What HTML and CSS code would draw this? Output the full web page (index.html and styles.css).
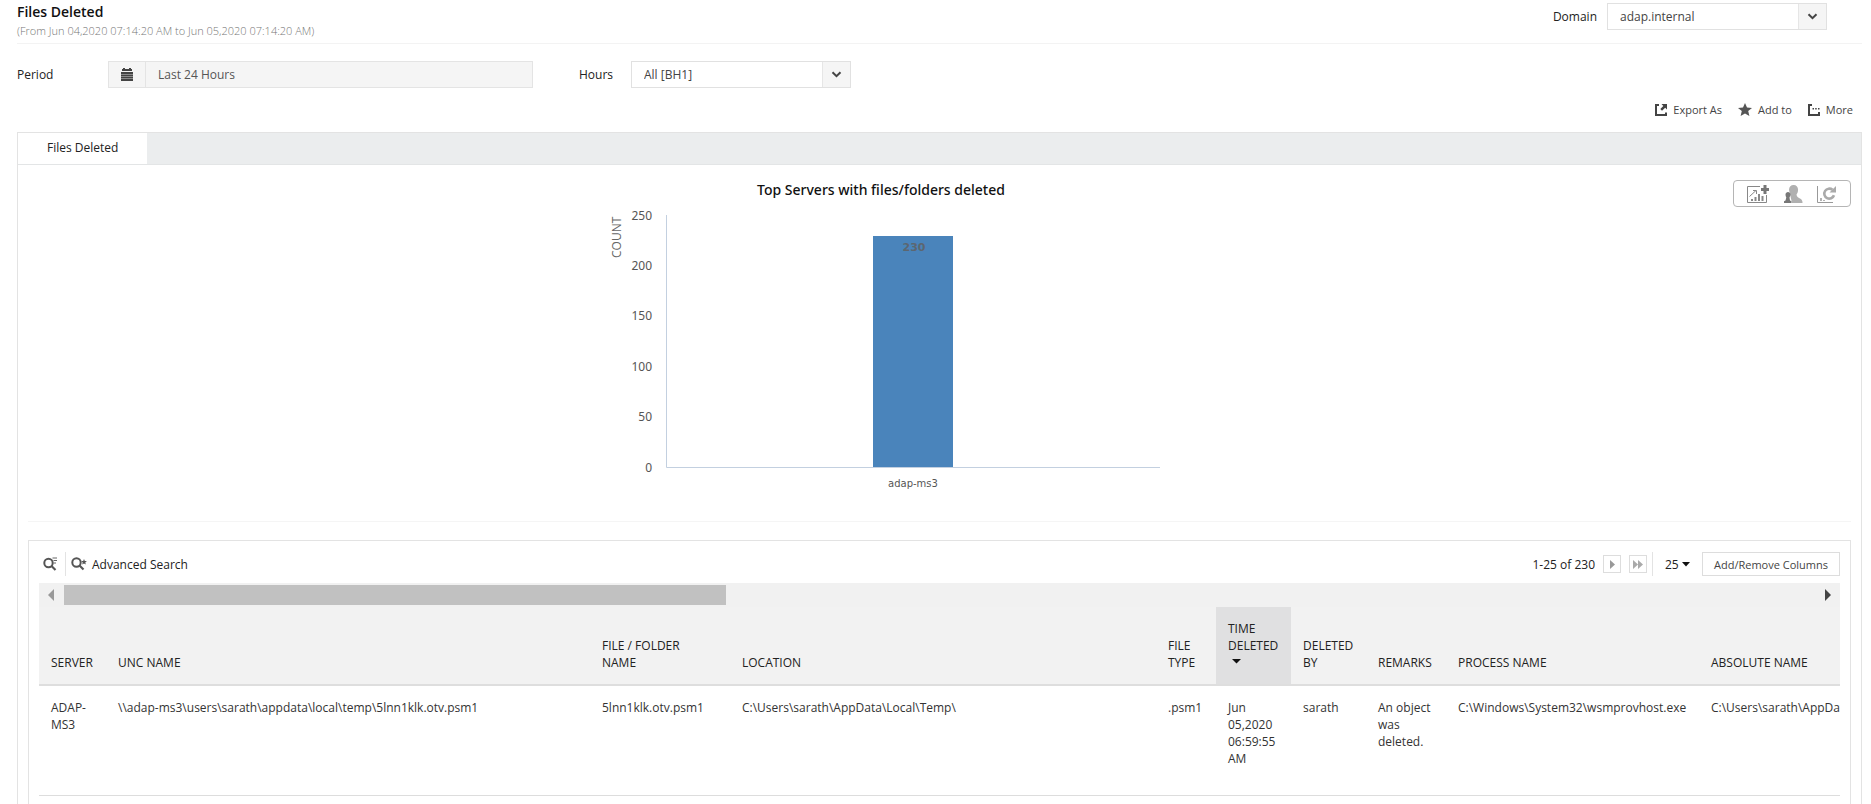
FILE: index.html
```html
<!DOCTYPE html>
<html lang="en">
<head>
    <meta charset="UTF-8">
    <meta name="viewport" content="width=device-width, initial-scale=1.0">
    <title>Files Deleted</title>
    <link rel="stylesheet" href="styles.css">
</head>
<body>
    <header class="page-header">
        <div class="page-heading">
            <h1>Files Deleted</h1>
            <p>(From Jun 04,2020 07:14:20 AM to Jun 05,2020 07:14:20 AM)</p>
        </div>
        <div class="domain">
            <label for="domain">Domain</label>
            <div class="select-box">
                <select id="domain"><option>adap.internal</option></select>
                <span class="select-arrow"><svg width="11" height="7" viewBox="0 0 11 7"><path d="M1.5 1.2l4 4 4-4" fill="none" stroke="#444" stroke-width="2"/></svg></span>
            </div>
        </div>
    </header>

    <form class="filters">
        <label class="period-label" for="period">Period</label>
        <div class="period-box">
            <span class="period-icon">
                <svg width="12" height="13" viewBox="0 0 12 13"><path d="M1 1h1V0h2v1h4V0h2v1h1v2H1zM0 4h12v9H0z" fill="#444"/><path d="M0 6.500h12M0 8.500h12M0 10.500h12" stroke="#aaa" stroke-width=".7"/></svg>
            </span>
            <input type="text" id="period" value="Last 24 Hours" readonly>
        </div>
        <label class="hours-label" for="hours">Hours</label>
        <div class="select-box">
            <select id="hours"><option>All [BH1]</option></select>
            <span class="select-arrow"><svg width="11" height="7" viewBox="0 0 11 7"><path d="M1.5 1.2l4 4 4-4" fill="none" stroke="#444" stroke-width="2"/></svg></span>
        </div>
    </form>

    <div class="actions">
        <button type="button">
            <svg width="12" height="12" viewBox="0 0 12 12"><path d="M4 1H1v10h10V8.500" fill="none" stroke="#444" stroke-width="2"/><path d="M6.500 0H12v5.500L10.200 3.700 7 6.800 5.300 5 8.300 1.900z" fill="#444"/></svg>
            Export As
        </button>
        <button type="button">
            <svg width="14" height="13" viewBox="0 0 14 13"><path d="M7 0l2 4.500 5 .4-3.800 3.200 1.200 4.900L7 10.400 2.600 13l1.200-4.900L0 4.900l5-.4z" fill="#555"/></svg>
            Add to
        </button>
        <button type="button">
            <svg width="12" height="12" viewBox="0 0 12 12"><path d="M4 1H1v10h10V8" fill="none" stroke="#444" stroke-width="2"/><path d="M4.500 4h1.500v1.500H4.500zM7.200 4h1.500v1.500H7.200zM10 4h1.500v1.500H10z" fill="#444"/></svg>
            More
        </button>
    </div>

    <main class="report">
        <nav class="tabs">
            <a href="#" class="tab-active">Files Deleted</a>
        </nav>

        <section class="chart-row">
            <div class="chart">
                <svg width="562" height="322" viewBox="0 0 562 322" role="img">
                    <text class="chart-title" x="281" y="15">Top Servers with files/folders deleted</text>
                    <text class="axis-title" transform="translate(21 78) rotate(-90)" x="0" y="0">COUNT</text>
                    <g class="axis-values">
                        <text x="52" y="40">250</text>
                        <text x="52" y="90">200</text>
                        <text x="52" y="140">150</text>
                        <text x="52" y="191">100</text>
                        <text x="52" y="241">50</text>
                        <text x="52" y="292">0</text>
                    </g>
                    <path d="M66.500 35v252.500H560" class="axis-line"/>
                    <rect x="273" y="56" width="80" height="231" class="bar"/>
                    <text class="bar-value" x="314" y="71">230</text>
                    <text class="bar-name" x="313" y="307">adap-ms3</text>
                </svg>
            </div>
            <div class="chart-tools">
                <button type="button" aria-label="Add to dashboard">
                    <svg width="22" height="18" viewBox="0 0 22 18"><path d="M13 1.500H.5v16h19V10" fill="none" stroke="#888"/><path d="M2.500 11.500L9 5.500M6 5.500h3.500V9" fill="none" stroke="#888"/><path d="M4 14h2v2H4zM7.500 12h2v4h-2zM11 9h2v7h-2zM14.500 11h2v5h-2z" fill="#888"/><path d="M16.500 0h3v3h2.500v3h-2.500v3h-3V6H14V3h2.500z" fill="#777"/></svg>
                </button>
                <button type="button" aria-label="Users">
                    <svg width="20" height="18" viewBox="0 0 20 18"><path d="M6 5c0-7 10-6.500 9 .5 0 2-1 3-1.500 4 .3 2.500 1.500 3 3.500 4 2 1 2.500 2.500 2.500 4.500H9z" fill="#b0b0b0"/><path d="M2.500 9.500c0-3.500 5-3.500 5 0 0 1.600-.8 2.300-1 3L7 15.500l1.500.7V18H1v-1.800l1.500-.7.8-3c-.3-.7-.8-1.400-.8-3z" fill="#777"/></svg>
                </button>
                <button type="button" aria-label="Refresh chart">
                    <svg width="20" height="18" viewBox="0 0 20 18"><path d="M.5 1v16.500H16" fill="none" stroke="#999"/><path d="M4 13v3M7 15v1" stroke="#999" stroke-width="1.500"/><path d="M15.500 4.800a5 5 0 1 0 1.500 5.500" fill="none" stroke="#aaa" stroke-width="2.600"/><path d="M19 1v6.500h-6.500z" fill="#aaa"/></svg>
                </button>
            </div>
        </section>

        <section class="results">
            <div class="results-bar">
                <button type="button" class="search-btn" aria-label="Search">
                    <svg width="14" height="14" viewBox="0 0 14 14"><circle cx="5.500" cy="6" r="4.200" fill="none" stroke="#555" stroke-width="2"/><path d="M8.500 9l4 4" stroke="#555" stroke-width="2.200"/><path d="M9.500 1H14M10.500 3.500H14M10.500 6H13" stroke="#666"/></svg>
                </button>
                <button type="button" class="advanced-btn">
                    <svg width="16" height="14" viewBox="0 0 16 14"><circle cx="5.500" cy="5.500" r="4.200" fill="none" stroke="#555" stroke-width="2"/><path d="M8.500 8.500l4 4" stroke="#555" stroke-width="2.200"/><path d="M13 2l.8 1.900 2.100.1-1.600 1.400.5 2.100L13 6.400l-1.800 1.100.5-2.100L10.100 4l2.100-.1z" fill="#555"/></svg>
                    Advanced Search
                </button>
                <div class="paging">
                    <span class="paging-count">1-25 of 230</span>
                    <button type="button" class="page-btn" aria-label="Next page"><svg width="5" height="9" viewBox="0 0 5 9"><path d="M0 0l5 4.500L0 9z" fill="#999"/></svg></button>
                    <button type="button" class="page-btn" aria-label="Last page"><svg width="10" height="9" viewBox="0 0 10 9"><path d="M0 0l5 4.500L0 9zM5 0l5 4.500L5 9z" fill="#aaa"/></svg></button>
                    <div class="page-size">
                        <select aria-label="Rows per page"><option>25</option></select>
                        <svg width="8" height="5" viewBox="0 0 8 5"><path d="M0 0h8L4 4.500z" fill="#111"/></svg>
                    </div>
                    <button type="button" class="columns-btn">Add/Remove Columns</button>
                </div>
            </div>

            <div class="scrollbar">
                <svg width="6" height="12" viewBox="0 0 6 12"><path d="M6 0v12L0 6z" fill="#999"/></svg>
                <div class="scroll-track"><div class="scroll-thumb"></div></div>
                <svg width="6" height="12" viewBox="0 0 6 12"><path d="M0 0v12l6-6z" fill="#444"/></svg>
            </div>

            <div class="table-wrap">
                <table>
                    <colgroup>
                        <col class="col-server">
                        <col class="col-unc">
                        <col class="col-file">
                        <col class="col-location">
                        <col class="col-type">
                        <col class="col-time">
                        <col class="col-by">
                        <col class="col-remarks">
                        <col class="col-process">
                        <col class="col-absolute">
                    </colgroup>
                    <thead>
                        <tr>
                            <th>Server</th>
                            <th>UNC Name</th>
                            <th>File / Folder<br>Name</th>
                            <th>Location</th>
                            <th>File Type</th>
                            <th class="sorted">Time Deleted <svg class="sort-arrow" width="9" height="5" viewBox="0 0 9 5"><path d="M0 0h9L4.500 4.500z" fill="#111"/></svg></th>
                            <th>Deleted By</th>
                            <th>Remarks</th>
                            <th>Process Name</th>
                            <th>Absolute Name</th>
                        </tr>
                    </thead>
                    <tbody>
                        <tr>
                            <td>ADAP-MS3</td>
                            <td>\\adap-ms3\users\sarath\appdata\local\temp\5lnn1klk.otv.psm1</td>
                            <td>5lnn1klk.otv.psm1</td>
                            <td>C:\Users\sarath\AppData\Local\Temp\</td>
                            <td>.psm1</td>
                            <td>Jun 05,2020 06:59:55 AM</td>
                            <td>sarath</td>
                            <td>An object was deleted.</td>
                            <td>C:\Windows\System32\wsmprovhost.exe</td>
                            <td>C:\Users\sarath\AppData\Local\Temp\5lnn1klk.otv.psm1</td>
                        </tr>
                    </tbody>
                </table>
            </div>
        </section>
    </main>
</body>
</html>
```
FILE: styles.css
```css
* {
    box-sizing: border-box;
}

html {
    height: 100%;
    overflow: hidden;
}

body {
    height: 100%;
    margin: 0;
    padding: 0 9px 0 17px;
    display: flex;
    flex-direction: column;
    background: #fff;
    color: #222;
    font-family: "Open Sans", "Noto Sans", sans-serif;
    font-size: 12px;
    line-height: 17px;
}

button,
input,
select {
    font: inherit;
    color: inherit;
}

button {
    display: flex;
    align-items: center;
    padding: 0;
    border: 0;
    background: none;
    cursor: pointer;
}

/* header */
.page-header {
    display: flex;
    justify-content: space-between;
    align-items: flex-start;
    height: 44px;
    flex-shrink: 0;
    border-bottom: 1px solid #f3f3f3;
}

.page-heading h1 {
    margin: 2px 0 0;
    font-size: 14px;
    font-weight: 600;
    line-height: 20px;
    color: #111;
}

.page-heading p {
    margin: 0;
    font-size: 11px;
    font-weight: 300;
    color: #777;
}

.domain {
    display: flex;
    align-items: center;
    gap: 10px;
    margin: 3px 35px 0 0;
}

.select-box {
    position: relative;
    width: 220px;
}

.select-box select {
    appearance: none;
    display: block;
    width: 100%;
    height: 27px;
    padding: 0 40px 0 12px;
    border: 1px solid #e1e1e1;
    border-radius: 0;
    background: #fff;
    color: #444;
}

.select-arrow {
    position: absolute;
    top: 1px;
    right: 1px;
    bottom: 1px;
    width: 28px;
    display: flex;
    align-items: center;
    justify-content: center;
    border-left: 1px solid #e6e6e6;
    background: #f5f5f5;
    pointer-events: none;
}

/* filters */
.filters {
    display: flex;
    align-items: center;
    margin: 17px 0 0;
}

.period-label {
    width: 91px;
}

.period-box {
    display: flex;
    width: 425px;
    height: 27px;
    border: 1px solid #e4e4e4;
    background: #f5f5f5;
}

.period-icon {
    display: flex;
    align-items: center;
    justify-content: center;
    width: 37px;
    border-right: 1px solid #e4e4e4;
}

.period-box input {
    flex: 1;
    padding: 0 12px;
    border: 0;
    background: none;
    color: #555;
}

.hours-label {
    width: 52px;
    margin-left: 46px;
}

/* actions */
.actions {
    display: flex;
    justify-content: flex-end;
    gap: 16px;
    margin: 13px 9px 14px 0;
    font-size: 11px;
    color: #444;
}

.actions button {
    gap: 6px;
}

/* report */
.report {
    flex: 1;
    min-height: 0;
    display: flex;
    flex-direction: column;
    border: 1px solid #e3e3e3;
    border-bottom: 0;
}

.tabs {
    display: flex;
    flex-shrink: 0;
    height: 32px;
    border-bottom: 1px solid #e3e5e6;
    background: #ebedee;
}

.tabs a {
    padding: 6px 29px;
    color: #222;
    text-decoration: none;
}

.tabs .tab-active {
    background: #fff;
}

.chart-row {
    display: flex;
    flex-shrink: 0;
    align-items: flex-start;
    margin: 0 10px;
    padding: 15px 0 19px;
    border-bottom: 1px solid #f5f5f5;
}

.chart {
    flex: 1;
    display: flex;
    justify-content: center;
}

.chart-title {
    font-family: "Noto Sans", sans-serif;
    font-size: 14px;
    font-weight: 500;
    text-anchor: middle;
    fill: #111;
}

.axis-title {
    font-size: 12px;
    fill: #666;
}

.axis-values {
    font-family: "Noto Sans", sans-serif;
    font-size: 12px;
    text-anchor: end;
    fill: #555;
}

.axis-line {
    fill: none;
    stroke: #c3d0e0;
}

.bar {
    fill: #4a84bb;
}

.bar-value {
    font-family: "DejaVu Sans", sans-serif;
    font-size: 11px;
    font-weight: 700;
    text-anchor: middle;
    fill: #5c6670;
}

.bar-name {
    font-family: "DejaVu Sans", sans-serif;
    font-size: 10px;
    text-anchor: middle;
    fill: #555;
}

.chart-tools {
    display: flex;
    align-items: center;
    gap: 14px;
    height: 27px;
    padding: 0 13px;
    border: 1px solid #b5b5b5;
    border-radius: 4px;
}

/* results */
.results {
    flex: 1;
    min-height: 0;
    margin: 18px 10px 0;
    padding: 0 10px;
    border: 1px solid #e3e3e3;
    border-bottom: 0;
    overflow: hidden;
}

.results-bar {
    display: flex;
    align-items: center;
    height: 42px;
    padding-top: 4px;
}

.results-bar svg {
    display: block;
}

.search-btn {
    height: 24px;
    padding: 0 8px 0 4px;
    border-right: 1px solid #e3e3e3;
}

.advanced-btn {
    gap: 5px;
    padding-left: 5px;
}

.paging {
    display: flex;
    align-items: center;
    gap: 8px;
    margin-left: auto;
}

.page-btn {
    justify-content: center;
    width: 18px;
    height: 18px;
    border: 1px solid #ddd;
}

.page-size {
    display: flex;
    align-items: center;
    gap: 3px;
    height: 24px;
    margin: 0 4px 0 -3px;
    padding-left: 12px;
    border-left: 1px solid #e3e3e3;
}

.page-size select {
    appearance: none;
    padding: 0;
    border: 0;
    background: none;
}

.columns-btn {
    height: 24px;
    padding: 0 11px;
    border: 1px solid #ddd;
    font-size: 11px;
    color: #444;
}

.scrollbar {
    display: flex;
    align-items: center;
    gap: 10px;
    height: 24px;
    padding: 0 9px;
    background: #f1f1f1;
}

.scroll-track {
    flex: 1;
}

.scroll-thumb {
    width: 37.8%;
    height: 20px;
    background: #c1c1c1;
}

.table-wrap {
    overflow: hidden;
}

table {
    width: 2100px;
    table-layout: fixed;
    border-collapse: collapse;
}

.col-server { width: 67px; }
.col-unc { width: 484px; }
.col-file { width: 140px; }
.col-location { width: 426px; }
.col-type { width: 60px; }
.col-time { width: 75px; }
.col-by { width: 75px; }
.col-remarks { width: 80px; }
.col-process { width: 253px; }

th,
td {
    padding: 13px 8px 13px 12px;
    text-align: left;
}

th {
    border-bottom: 2px solid #dedede;
    background: #f2f2f2;
    font-weight: 500;
    text-transform: uppercase;
    vertical-align: bottom;
}

th.sorted {
    background: #e0e0e1;
}

.sort-arrow {
    margin: 0 4px 3px;
}

td {
    height: 110px;
    border-bottom: 1px solid #ddd;
    color: #333;
    vertical-align: top;
}
```
